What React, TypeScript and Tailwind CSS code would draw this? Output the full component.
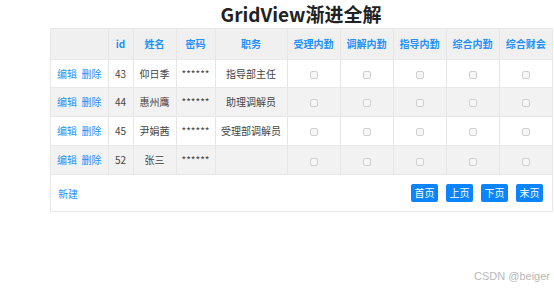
import React from "react";

type Row = { id: number; name: string; job: string };

const rows: Row[] = [
  { id: 43, name: "仰日季", job: "指导部主任" },
  { id: 44, name: "惠州鹰", job: "助理调解员" },
  { id: 45, name: "尹娟茜", job: "受理部调解员" },
  { id: 52, name: "张三", job: "" },
];

const roles = ["受理内勤", "调解内勤", "指导内勤", "综合内勤", "综合财会"];

const Box = () => (
  <span className="inline-block w-[8px] h-[8px] rounded-[2px] border border-[#d0d0d0] bg-[#f6f6f6] align-middle" />
);

export default function App() {
  const font = { fontFamily: '"Noto Sans CJK SC", "Noto Sans", sans-serif' };
  return (
    <div className="relative w-[554px] h-[288px] bg-white text-[#444]" style={font}>
      <h1 className="h-[28px] pt-[2px] pl-[50px] w-[552px] text-center text-[19px] leading-[24px] font-bold text-[#222]">
        GridView渐进全解
      </h1>
      <div className="ml-[50px] w-[503px] border border-[#e8e8e8]">
        <table className="w-full border-collapse table-fixed text-[10px]">
          <colgroup>
            <col className="w-[57px]" />
            <col className="w-[25px]" />
            <col className="w-[43px]" />
            <col className="w-[39px]" />
            <col className="w-[72px]" />
            <col className="w-[53px]" />
            <col className="w-[53px]" />
            <col className="w-[53px]" />
            <col className="w-[53px]" />
            <col className="w-[53px]" />
          </colgroup>
          <thead>
            <tr className="h-[30px] bg-[#f0f0f0] text-[#1e90ff] font-bold">
              <th className="border-r border-[#e6e6e6]"></th>
              <th className="border-r border-[#e6e6e6]">id</th>
              <th className="border-r border-[#e6e6e6]">姓名</th>
              <th className="border-r border-[#e6e6e6]">密码</th>
              <th className="border-r border-[#e6e6e6]">职务</th>
              {roles.map((r, i) => (
                <th key={r} className={i < 4 ? "border-r border-[#e6e6e6]" : ""}>
                  {r}
                </th>
              ))}
            </tr>
          </thead>
          <tbody>
            {rows.map((row, idx) => (
              <tr
                key={row.id}
                className={`${idx === 0 ? "h-[28px]" : "h-[29px]"} ${idx % 2 === 1 ? "bg-[#f2f2f2]" : "bg-white"} border-t border-[#e8e8e8]`}
              >
                <td className="border-r border-[#e6e6e6] text-center text-[#1e90ff]">
                  编辑&nbsp;&nbsp;删除
                </td>
                <td className="border-r border-[#e6e6e6] text-center">{row.id}</td>
                <td className="border-r border-[#e6e6e6] text-center">{row.name}</td>
                <td className="border-r border-[#e6e6e6] text-center">******</td>
                <td className="border-r border-[#e6e6e6] text-center">{row.job}</td>
                {roles.map((r, i) => (
                  <td key={r} className={`text-center ${i < 4 ? "border-r border-[#e6e6e6]" : ""}`}>
                    <Box />
                  </td>
                ))}
              </tr>
            ))}
          </tbody>
        </table>
        <div className="h-[37px] flex items-center justify-between border-t border-[#e8e8e8] pl-[7px] pr-[9px] text-[10px]">
          <a href="#" className="text-[#1e90ff]">新建</a>
          <div className="flex gap-[8px]">
            {["首页", "上页", "下页", "末页"].map((b) => (
              <button
                key={b}
                className="w-[27px] h-[18px] rounded-[2px] bg-[#0a84ff] text-white text-[10px] leading-[18px]"
              >
                {b}
              </button>
            ))}
          </div>
        </div>
      </div>
      <div
        className="absolute right-[4px] bottom-[4px] text-[11px] text-[#b8b8b8]"
        style={{ fontFamily: '"Liberation Sans", sans-serif' }}
      >
        CSDN @beiger
      </div>
    </div>
  );
}
